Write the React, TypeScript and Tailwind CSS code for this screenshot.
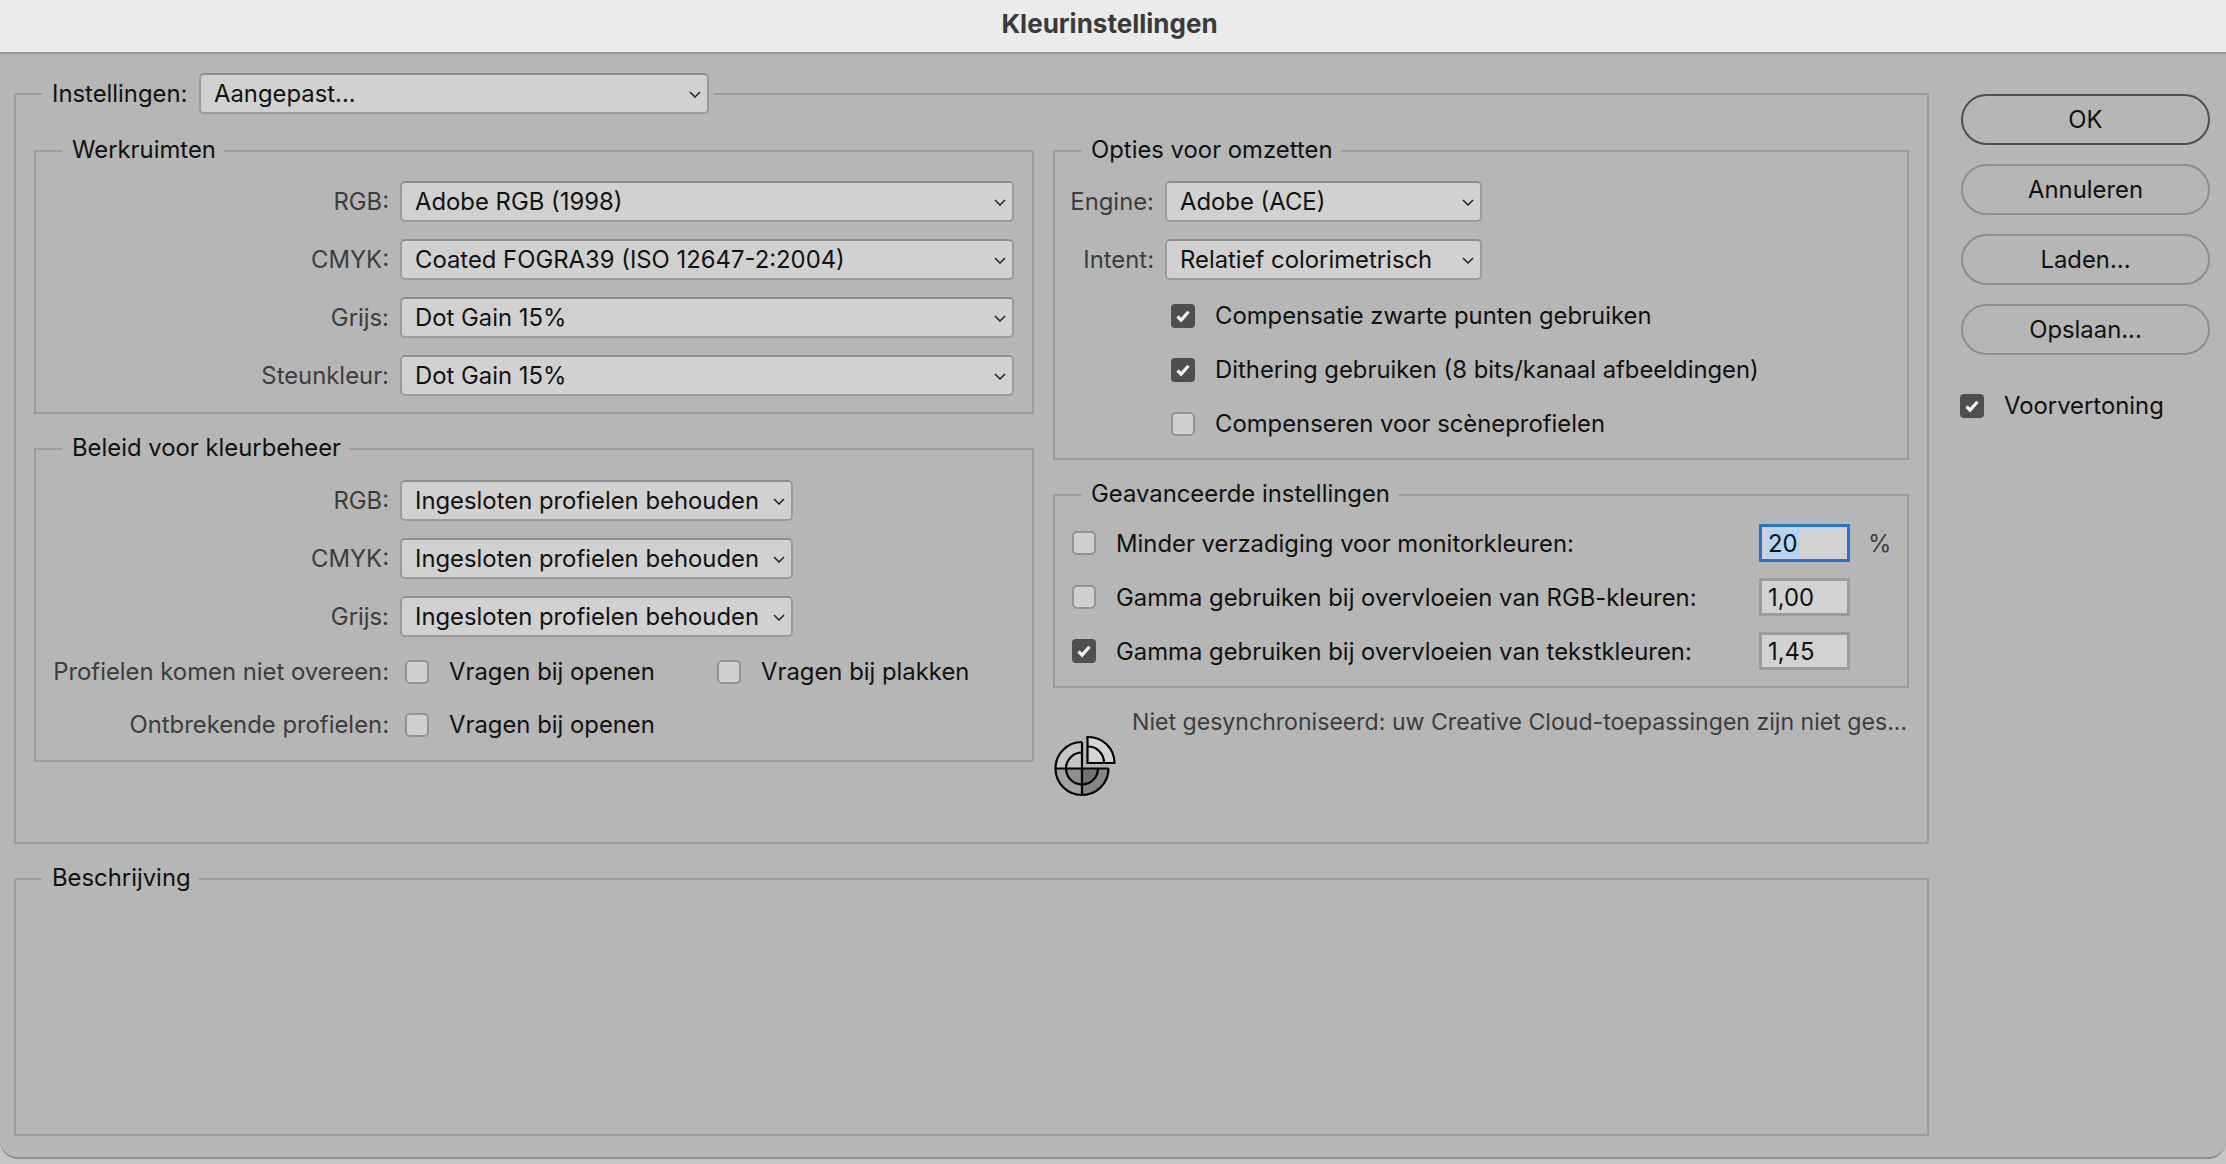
import React from "react";

const font = { fontFamily: "Inter, 'Noto Sans', sans-serif" };

function Chevron() {
  return (
    <svg width="12" height="7" viewBox="0 0 12 7" fill="none" className="shrink-0">
      <path d="M1 1l5 5 5-5" stroke="#222" strokeWidth="1.5" />
    </svg>
  );
}

function Select({ value, className }: { value: string; className: string }) {
  return (
    <div className={`h-[41px] flex items-center justify-between pl-[13px] pr-[6px] pt-px rounded-[5px] bg-[#d1d1d1] border-2 border-[#9b9b9b] border-t-[#8f8f8f] text-[#111] whitespace-nowrap ${className}`}>
      <span>{value}</span>
      <Chevron />
    </div>
  );
}

function Check({ checked }: { checked?: boolean }) {
  return checked ? (
    <div className="w-6 h-6 shrink-0 rounded-[4px] bg-[#4f4f4f] flex items-center justify-center">
      <svg width="16" height="14" viewBox="0 0 16 14" fill="none">
        <path d="M2.5 7.5l3.6 3.6L13.5 2.8" stroke="#f2f2f2" strokeWidth="3.2" />
      </svg>
    </div>
  ) : (
    <div className="w-6 h-6 shrink-0 rounded-[5px] bg-[#cfcfcf] border-2 border-[#939393]" />
  );
}

function Group({ title, className, children }: { title: string; className: string; children: React.ReactNode }) {
  return (
    <fieldset className={`border-2 border-[#9c9c9c] ${className}`}>
      <legend className="ml-[26px] pl-[10px] pr-[8px] h-7 leading-[26px] text-[#111]">{title}</legend>
      {children}
    </fieldset>
  );
}

function LabeledSelect({ label, value, width }: { label: string; value: string; width: string }) {
  return (
    <div className="flex items-center h-[41px] gap-[11px]">
      <span className="w-[353px] text-right text-[#3d3d3d] whitespace-nowrap">{label}</span>
      <Select value={value} className={width} />
    </div>
  );
}

function CheckRow({ checked, text, className }: { checked?: boolean; text: string; className?: string }) {
  return (
    <div className={`flex items-center gap-5 ${className ?? ""}`}>
      <Check checked={checked} />
      <span className="text-[#111] whitespace-nowrap">{text}</span>
    </div>
  );
}

function AdvancedRow({ checked, text, value, focused, unit }: { checked?: boolean; text: string; value: string; focused?: boolean; unit?: string }) {
  return (
    <div className="flex items-center h-[38px] pl-[17px]">
      <Check checked={checked} />
      <span className="ml-5 w-[643px] pt-px text-[#111] whitespace-nowrap">{text}</span>
      <div className={`w-[91px] h-[38px] flex items-center pt-px bg-[#d2d2d2] border-[3px] text-[#111] ${focused ? "pl-[4px] border-[#2272d8]" : "pl-[6px] border-[#9c9c9c]"}`}>
        {focused ? <span className="bg-[#b5d4f1] px-[2px]">{value}</span> : <span>{value}</span>}
      </div>
      {unit && <span className="ml-[18px] pt-px text-[#3d3d3d]">{unit}</span>}
    </div>
  );
}

function SyncIcon() {
  return (
    <svg width="64" height="62" viewBox="0 0 64 62" className="shrink-0 -mt-px ml-px">
      <path d="M28 7A26.5 26.5 0 0 0 1.5 33.5H28z" fill="#c6c6c6" />
      <path d="M1.5 33.5A26.5 26.5 0 0 0 28 60V33.5z" fill="#a2a2a2" />
      <path d="M28 60a26.5 26.5 0 0 0 26.500-26.500H28z" fill="#868686" />
      <path d="M28 33.500H12a16 16 0 0 0 16 16z" fill="#8e8e8e" />
      <path d="M28 33.500v16a16 16 0 0 0 16-16z" fill="#727272" />
      <g fill="none" stroke="#000" strokeWidth="2.2">
        <path d="M28 7A26.5 26.5 0 1 0 54.500 33.500" />
        <path d="M28 17.500A16 16 0 1 0 44 33.500" />
        <path d="M1.500 33.500H54.500M28 7V60" />
      </g>
      <path d="M33.500 28V2A26 26 0 0 1 60.500 28z" fill="#d4d4d4" stroke="#000" strokeWidth="2.2" />
      <path d="M33.500 11.500A16 16 0 0 1 50 28" fill="none" stroke="#000" strokeWidth="2.2" />
    </svg>
  );
}

function ActionButton({ label, primary }: { label: string; primary?: boolean }) {
  return (
    <div className={`h-[51px] w-[249px] flex items-center justify-center rounded-full border-2 text-[#111] ${primary ? "border-[#4f4f4f]" : "border-[#8e8e8e]"}`}>
      {label}
    </div>
  );
}

export default function App() {
  return (
    <div className="w-[2226px] h-[1164px] overflow-hidden bg-[#c6c6c6] text-[23.85px] leading-7" style={font}>
      <div className="h-[1159px] flex flex-col rounded-b-[18px] overflow-hidden bg-[#b6b6b6] border-b-2 border-[#8f8f8f]">
        <div className="h-[54px] shrink-0 flex items-center justify-center pb-[4px] pr-[7px] bg-[#ebebeb] border-b-2 border-[#999] font-bold text-[#3a3a3a] text-[26px]">
          Kleurinstellingen
        </div>
        <div className="flex-1 flex pl-[14px] pt-[19px]">
          <div className="w-[1915px] shrink-0 flex flex-col gap-[21px]">
            <fieldset className="h-[771px] border-2 border-[#9c9c9c] pl-[18px] pr-[18px]">
              <legend className="ml-[8px] pl-[10px] pr-[5px] h-[41px] flex items-center gap-[11px] text-[#111]">
                <span className="w-[136px] whitespace-nowrap">Instellingen:</span>
                <Select value="Aangepast..." className="w-[510px]" />
              </legend>
              <div className="flex gap-[19px] pt-[23px]">
                <div className="w-[1000px] shrink-0 flex flex-col gap-[21px]">
                  <Group title="Werkruimten" className="h-[277px] pt-[16px] flex flex-col gap-[17px]">
                    <LabeledSelect label="RGB:" value="Adobe RGB (1998)" width="w-[614px]" />
                    <LabeledSelect label="CMYK:" value="Coated FOGRA39 (ISO 12647-2:2004)" width="w-[614px]" />
                    <LabeledSelect label="Grijs:" value="Dot Gain 15%" width="w-[614px]" />
                    <LabeledSelect label="Steunkleur:" value="Dot Gain 15%" width="w-[614px]" />
                  </Group>
                  <Group title="Beleid voor kleurbeheer" className="h-[327px] pt-[17px]">
                    <div className="flex flex-col gap-[17px]">
                      <LabeledSelect label="RGB:" value="Ingesloten profielen behouden" width="w-[393px]" />
                      <LabeledSelect label="CMYK:" value="Ingesloten profielen behouden" width="w-[393px]" />
                      <LabeledSelect label="Grijs:" value="Ingesloten profielen behouden" width="w-[393px]" />
                    </div>
                    <div className="flex items-center h-7 mt-[21px]">
                      <span className="w-[353px] text-right text-[#3d3d3d] whitespace-nowrap">Profielen komen niet overeen:</span>
                      <CheckRow text="Vragen bij openen" className="ml-[16px] w-[312px]" />
                      <CheckRow text="Vragen bij plakken" />
                    </div>
                    <div className="flex items-center h-7 mt-[25px]">
                      <span className="w-[353px] text-right text-[#3d3d3d] whitespace-nowrap">Ontbrekende profielen:</span>
                      <CheckRow text="Vragen bij openen" className="ml-[16px]" />
                    </div>
                  </Group>
                </div>
                <div className="flex-1 flex flex-col">
                  <Group title="Opties voor omzetten" className="h-[323px] pt-[16px]">
                    <div className="flex flex-col gap-[17px]">
                      <div className="flex items-center h-[41px] gap-[11px]">
                        <span className="w-[99px] text-right text-[#3d3d3d]">Engine:</span>
                        <Select value="Adobe (ACE)" className="w-[317px]" />
                      </div>
                      <div className="flex items-center h-[41px] gap-[11px]">
                        <span className="w-[99px] text-right text-[#3d3d3d]">Intent:</span>
                        <Select value="Relatief colorimetrisch" className="w-[317px]" />
                      </div>
                    </div>
                    <div className="flex flex-col gap-[26px] pl-[116px] mt-[22px]">
                      <CheckRow checked text="Compensatie zwarte punten gebruiken" />
                      <CheckRow checked text="Dithering gebruiken (8 bits/kanaal afbeeldingen)" />
                      <CheckRow text="Compenseren voor scèneprofielen" />
                    </div>
                  </Group>
                  <Group title="Geavanceerde instellingen" className="h-[207px] mt-[21px] pt-[15px] flex flex-col gap-4">
                    <AdvancedRow text="Minder verzadiging voor monitorkleuren:" value="20" focused unit="%" />
                    <AdvancedRow text="Gamma gebruiken bij overvloeien van RGB-kleuren:" value="1,00" />
                    <AdvancedRow checked text="Gamma gebruiken bij overvloeien van tekstkleuren:" value="1,45" />
                  </Group>
                  <div className="pl-[79px] pt-[20px] h-12 text-[23.1px] text-[#3d3d3d] whitespace-nowrap">
                    Niet gesynchroniseerd: uw Creative Cloud-toepassingen zijn niet ges...
                  </div>
                  <SyncIcon />
                </div>
              </div>
            </fieldset>
            <Group title="Beschrijving" className="h-[271px]">
              <div />
            </Group>
          </div>
          <div className="pl-[32px] pt-[21px] flex flex-col">
            <div className="flex flex-col gap-[19px]">
              <ActionButton label="OK" primary />
              <ActionButton label="Annuleren" />
              <ActionButton label="Laden..." />
              <ActionButton label="Opslaan..." />
            </div>
            <CheckRow checked text="Voorvertoning" className="mt-[37px] -ml-px" />
          </div>
        </div>
      </div>
    </div>
  );
}
